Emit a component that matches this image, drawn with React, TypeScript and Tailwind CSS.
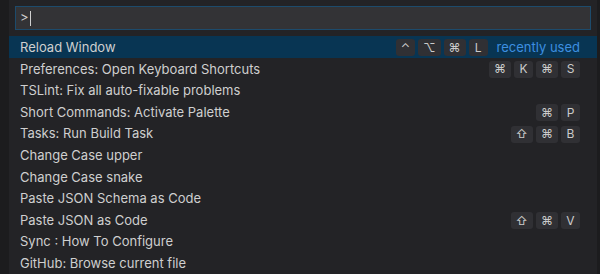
const rows: { label: string; keys?: string[]; recent?: boolean }[] = [
  { label: 'Reload Window', keys: ['⌃', '⌥', '⌘', 'L'], recent: true },
  { label: 'Preferences: Open Keyboard Shortcuts', keys: ['⌘', 'K', '⌘', 'S'] },
  { label: 'TSLint: Fix all auto-fixable problems' },
  { label: 'Short Commands: Activate Palette', keys: ['⌘', 'P'] },
  { label: 'Tasks: Run Build Task', keys: ['⇧', '⌘', 'B'] },
  { label: 'Change Case upper' },
  { label: 'Change Case snake' },
  { label: 'Paste JSON Schema as Code' },
  { label: 'Paste JSON as Code', keys: ['⇧', '⌘', 'V'] },
  { label: 'Sync : How To Configure' },
  { label: 'GitHub: Browse current file' },
];

function Key({ k }: { k: string }) {
  return (
    <span className="flex h-[17px] min-w-[19px] items-center justify-center rounded-[3px] bg-[#303034] px-[5px] text-[12px] text-[#cbcbcb] font-['Inter','DejaVu_Sans',sans-serif]">
      {k}
    </span>
  );
}

export default function App() {
  return (
    <div className="flex h-[274px] w-[600px] overflow-hidden bg-[#1c1c1e] font-['Inter','Noto_Sans',sans-serif]">
      <div className="ml-[9px] flex w-[588px] flex-col bg-[#232326] pt-[6px]">
        <div className="mx-[6px] mb-[6px] flex h-[24px] items-center border border-[#1d4b6c] bg-[#333336] px-[4px] text-[13px] text-[#d0d0d0]">
          <span>&gt;</span>
          <span className="ml-[1px] h-[15px] w-px bg-[#d0d0d0]" />
        </div>
        <div className="flex flex-col">
          {rows.map((r) => (
            <div
              key={r.label}
              className={`flex h-[21.6px] items-center pl-[11px] pr-[17px] pt-[2px] text-[13px] text-[#cfcfcf] ${r.recent ? 'bg-[#083553]' : ''}`}
            >
              <span className="flex-1 truncate">{r.label}</span>
              {r.keys && (
                <div className="flex items-center gap-[3px]">
                  {r.keys.map((k, i) => (
                    <Key key={i} k={k} />
                  ))}
                </div>
              )}
              {r.recent && <span className="ml-[9px] text-[13px] text-[#3d8fe0]">recently used</span>}
            </div>
          ))}
        </div>
      </div>
    </div>
  );
}
